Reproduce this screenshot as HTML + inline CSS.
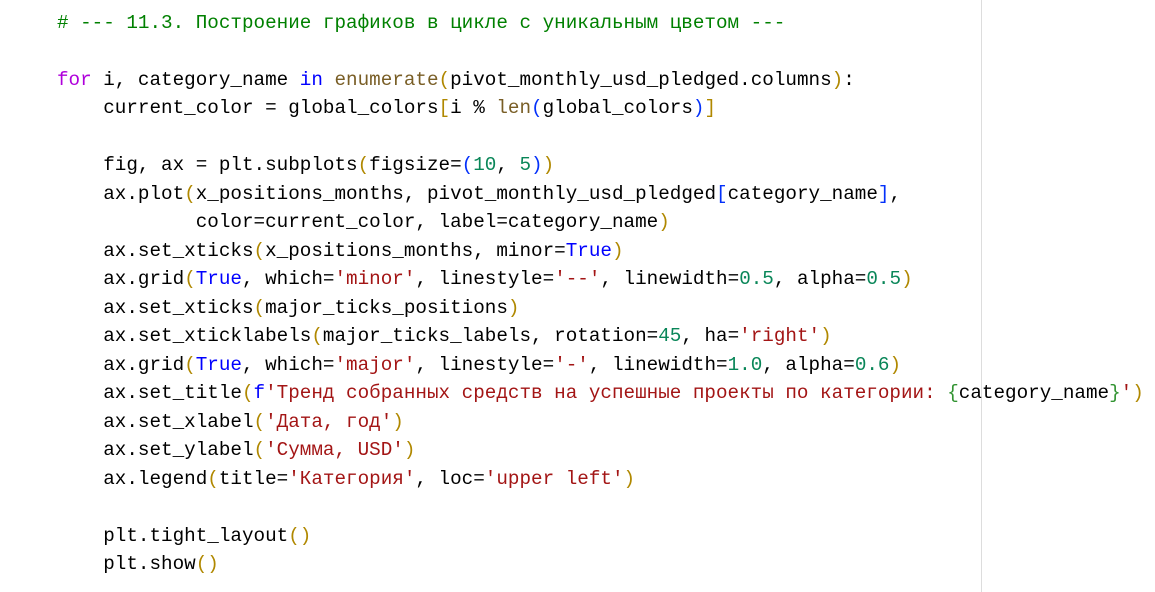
<!DOCTYPE html><html><head><meta charset="utf-8"><style>
body{margin:0;background:#fff;width:1155px;height:592px;overflow:hidden;position:relative}
pre{position:absolute;left:57px;top:8.5px;margin:0;font-family:"Liberation Mono","DejaVu Sans Mono",monospace;font-size:19.27px;line-height:28.5px;color:#000}
.vl{position:absolute;left:981px;top:0;width:1px;height:592px;background:#ddd}
.c{color:#008000}.k{color:#af00db}.b{color:#0000ff}.f{color:#795e26}.s{color:#a31515}.n{color:#098658}
.p1{color:#b08800}.p2{color:#0431fa}.p3{color:#319331}
</style></head><body><div class="vl"></div><pre><span class="c"># --- 11.3. Построение графиков в цикле с уникальным цветом ---</span>

<span class="k">for</span> i, category_name <span class="b">in</span> <span class="f">enumerate</span><span class="p1">(</span>pivot_monthly_usd_pledged.columns<span class="p1">)</span>:
    current_color = global_colors<span class="p1">[</span>i % <span class="f">len</span><span class="p2">(</span>global_colors<span class="p2">)</span><span class="p1">]</span>

    fig, ax = plt.subplots<span class="p1">(</span>figsize=<span class="p2">(</span><span class="n">10</span>, <span class="n">5</span><span class="p2">)</span><span class="p1">)</span>
    ax.plot<span class="p1">(</span>x_positions_months, pivot_monthly_usd_pledged<span class="p2">[</span>category_name<span class="p2">]</span>,
            color=current_color, label=category_name<span class="p1">)</span>
    ax.set_xticks<span class="p1">(</span>x_positions_months, minor=<span class="b">True</span><span class="p1">)</span>
    ax.grid<span class="p1">(</span><span class="b">True</span>, which=<span class="s">'minor'</span>, linestyle=<span class="s">'--'</span>, linewidth=<span class="n">0.5</span>, alpha=<span class="n">0.5</span><span class="p1">)</span>
    ax.set_xticks<span class="p1">(</span>major_ticks_positions<span class="p1">)</span>
    ax.set_xticklabels<span class="p1">(</span>major_ticks_labels, rotation=<span class="n">45</span>, ha=<span class="s">'right'</span><span class="p1">)</span>
    ax.grid<span class="p1">(</span><span class="b">True</span>, which=<span class="s">'major'</span>, linestyle=<span class="s">'-'</span>, linewidth=<span class="n">1.0</span>, alpha=<span class="n">0.6</span><span class="p1">)</span>
    ax.set_title<span class="p1">(</span><span class="b">f</span><span class="s">'Тренд собранных средств на успешные проекты по категории: </span><span class="p3">{</span>category_name<span class="p3">}</span><span class="s">'</span><span class="p1">)</span>
    ax.set_xlabel<span class="p1">(</span><span class="s">'Дата, год'</span><span class="p1">)</span>
    ax.set_ylabel<span class="p1">(</span><span class="s">'Сумма, USD'</span><span class="p1">)</span>
    ax.legend<span class="p1">(</span>title=<span class="s">'Категория'</span>, loc=<span class="s">'upper left'</span><span class="p1">)</span>

    plt.tight_layout<span class="p1">()</span>
    plt.show<span class="p1">()</span>
</pre></body></html>
